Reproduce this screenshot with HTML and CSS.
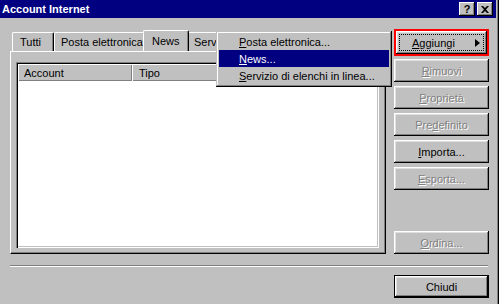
FILE: index.html
```html
<!DOCTYPE html>
<html lang="it">
<head>
    <meta charset="UTF-8">
    <title>Account Internet</title>
    <link rel="stylesheet" href="styles.css">
</head>
<body>

    <div class="window">
        <!-- Title bar -->
        <div class="titlebar">
            <span class="title">Account Internet</span>
            <div class="title-buttons">
                <span class="tbtn">?</span>
                <span class="tbtn">
                    <svg width="8" height="7" viewBox="0 0 8 7"><path d="M0 0h2l2 2 2-2h2L5 3.5 8 7H6L4 5 2 7H0l3-3.5z" fill="#000"/></svg>
                </span>
            </div>
        </div>

        <div class="content">
            <!-- Tabs and list -->
            <div class="tabs-area">
                <div class="tabstrip">
                    <div class="tab tab-tutti">Tutti</div>
                    <div class="tab tab-posta">Posta elettronica</div>
                    <div class="tab tab-news active">News</div>
                    <div class="tab tab-serv">Serv</div>
                </div>
                <div class="panel">
                    <div class="listview">
                        <div class="list-header">
                            <div class="col col-account">Account</div>
                            <div class="col col-tipo">Tipo</div>
                        </div>
                    </div>
                </div>
            </div>

            <!-- Button column -->
            <div class="buttons">
                <div class="focus-mark">
                    <button class="btn btn-add"><span class="focus-rect"><span class="add-label"><u>A</u>ggiungi</span><span class="arrow"></span></span></button>
                </div>
                <button class="btn disabled"><u>R</u>imuovi</button>
                <button class="btn disabled"><u>P</u>roprietà</button>
                <button class="btn disabled">Pre<u>d</u>efinito</button>
                <button class="btn"><u>I</u>mporta...</button>
                <button class="btn disabled"><u>E</u>sporta...</button>
                <button class="btn disabled btn-bottom"><u>O</u>rdina...</button>
            </div>
        </div>

        <div class="separator"></div>

        <div class="footer">
            <button class="btn default">Chiudi</button>
        </div>

        <!-- Popup menu of Aggiungi -->
        <div class="menu">
            <div class="menu-item"><u>P</u>osta elettronica...</div>
            <div class="menu-item selected"><u>N</u>ews...</div>
            <div class="menu-item"><u>S</u>ervizio di elenchi in linea...</div>
        </div>
    </div>

</body>
</html>
```

FILE: styles.css
```css
/* Global Styles */
* {
    margin: 0;
    padding: 0;
    box-sizing: border-box;
}

body {
    font-family: 'Liberation Sans', Arial, sans-serif;
    font-size: 11px;
    color: #000;
    background: #c0c0c0;
}

.window {
    position: relative;
    width: 499px;
    height: 304px;
    background: #c0c0c0;
    padding-right: 3px;
    box-shadow: inset -1px 0 #000, inset -2px 0 #808080;
    overflow: hidden;
}

/* Title bar */
.titlebar {
    height: 18px;
    background: #000080;
    display: flex;
    align-items: center;
    justify-content: space-between;
    padding: 0 3px 0 2px;
}

.title {
    color: #fff;
    font-weight: bold;
    font-size: 11px;
}

.title-buttons {
    display: flex;
    gap: 2px;
}

.tbtn {
    width: 16px;
    height: 14px;
    background: #c0c0c0;
    display: flex;
    align-items: center;
    justify-content: center;
    font-weight: bold;
    font-size: 11px;
    box-shadow: inset -1px -1px #000, inset 1px 1px #fff, inset -2px -2px #808080;
}

/* Main area */
.content {
    display: flex;
    padding: 11px 0 0 10px;
}

.tabs-area {
    width: 376px;
    padding-top: 1px;
}

.tabstrip {
    height: 21px;
    display: flex;
    align-items: flex-end;
    padding-left: 2px;
    overflow: hidden;
}

.tab {
    height: 19px;
    flex-shrink: 0;
    display: flex;
    align-items: center;
    padding-left: 7px;
    white-space: nowrap;
    border-top: 1px solid #fff;
    border-left: 1px solid #fff;
    border-right: 1px solid #000;
    border-radius: 2px 2px 0 0;
    box-shadow: inset -1px 0 #808080;
}

.tab-tutti { width: 42px; }
.tab-posta { width: 91px; padding-left: 6px; }
.tab-serv  { width: 40px; padding-left: 6px; }

.tab.active {
    position: relative;
    z-index: 1;
    width: 46px;
    height: 22px;
    margin: 0 -2px -1px -2px;
    padding-left: 8px;
    padding-bottom: 2px;
    background: #c0c0c0;
}

.panel {
    height: 203px;
    border-top: 1px solid #fff;
    border-left: 1px solid #fff;
    border-right: 1px solid #000;
    border-bottom: 1px solid #000;
    box-shadow: inset -1px -1px #808080;
    padding: 10px 0 0 5px;
}

.listview {
    width: 363px;
    height: 186px;
    background: #fff;
    padding: 2px;
    box-shadow: inset 1px 1px #808080, inset 2px 2px #000, inset -1px -1px #fff, inset -2px -2px #c0c0c0;
}

.list-header {
    display: flex;
    height: 17px;
}

.col {
    height: 17px;
    background: #c0c0c0;
    display: flex;
    align-items: center;
    box-shadow: inset 1px 1px #fff, inset -1px -1px #808080;
}

.col-account {
    width: 114px;
    padding-left: 6px;
}

.col-tipo {
    flex: 1;
    padding-left: 7px;
}

/* Button column */
.buttons {
    width: 95px;
    height: 225px;
    margin-left: 8px;
    display: flex;
    flex-direction: column;
    gap: 4px;
}

.btn {
    width: 95px;
    height: 23px;
    background: #c0c0c0;
    border: none;
    font-family: inherit;
    font-size: 11px;
    color: #000;
    display: flex;
    align-items: center;
    justify-content: center;
    box-shadow: inset -1px -1px #000, inset 1px 1px #fff, inset -2px -2px #808080, inset 2px 2px #dfdfdf;
}

.btn.disabled {
    color: #808080;
    text-shadow: 1px 1px #fff;
}

.btn-bottom {
    margin-top: auto;
}

.focus-mark {
    height: 27px;
    border: 2px solid #f00;
    margin-bottom: -1px;
}

.btn-add {
    width: 91px;
    height: 23px;
    padding: 3px;
}

.focus-rect {
    width: 100%;
    height: 100%;
    border: 1px dotted #000;
    display: flex;
    align-items: center;
    padding: 0 3px 0 12px;
}

.add-label {
    flex: 1;
    text-align: left;
}

.arrow {
    width: 0;
    height: 0;
    flex: none;
    border-top: 4px solid transparent;
    border-bottom: 4px solid transparent;
    border-left: 5px solid #000;
}

.separator {
    margin: 11px 0 0 10px;
    width: 478px;
    height: 2px;
    border-top: 1px solid #808080;
    border-bottom: 1px solid #fff;
}

.footer {
    display: flex;
    justify-content: flex-end;
    padding: 8px 7px 0 0;
}

.btn.default {
    border: 1px solid #000;
}

/* Popup menu */
.menu {
    position: absolute;
    left: 216px;
    top: 31px;
    width: 176px;
    padding: 2px 3px 3px 3px;
    background: #c0c0c0;
    box-shadow: inset -1px -1px #000, inset 1px 1px #c0c0c0, inset -2px -2px #808080, inset 2px 2px #fff;
}

.menu-item {
    height: 17px;
    display: flex;
    align-items: center;
    padding-left: 20px;
    white-space: nowrap;
}

.menu-item.selected {
    background: #000080;
    color: #fff;
}
```
